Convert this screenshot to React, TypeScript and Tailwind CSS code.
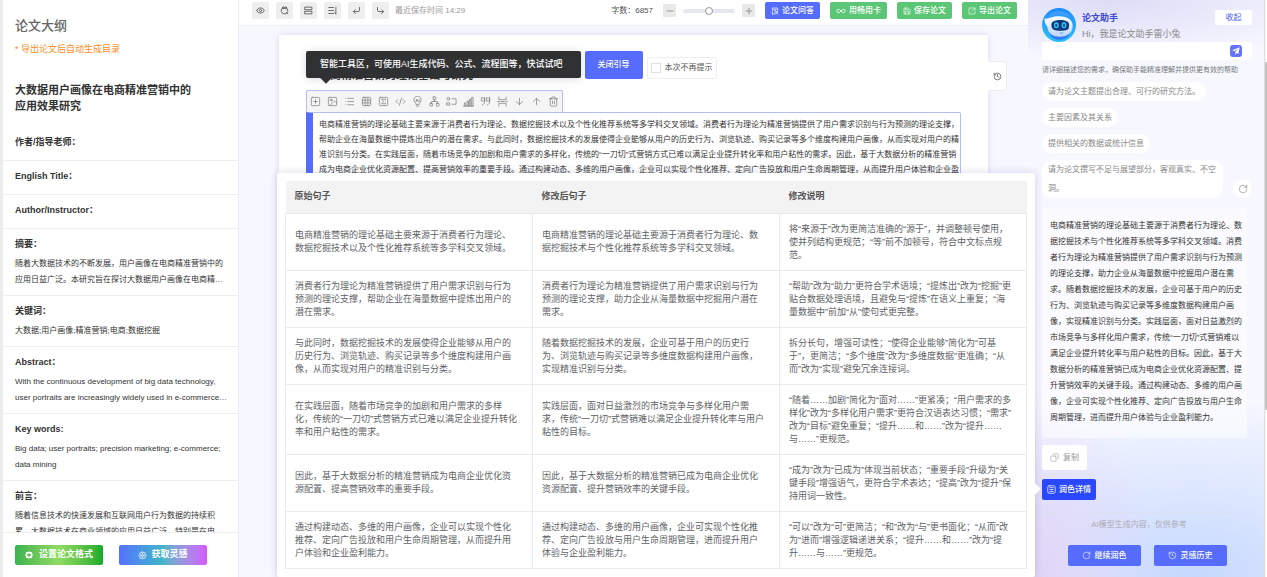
import React from 'react'
import {
  ArrowDown, ArrowUp, CodeXml, Copy, CornerDownLeft, CornerDownRight, Eye, Grid3x3, History, Image, Infinity,
  List, Minus, Network, Plus, RotateCw, Save, SquareArrowOutUpRight, SquarePlus, SquareSigma, Trash2,
} from 'lucide-react'

type IconProps = { className?: string }

const outline = [
  { label: '作者/指导老师：', body: '' },
  { label: 'English Title：', body: '' },
  { label: 'Author/Instructor：', body: '' },
  { label: '摘要：', body: '随着大数据技术的不断发展，用户画像在电商精准营销中的应用日益广泛。本研究旨在探讨大数据用户画像在电商精…' },
  { label: '关键词：', body: '大数据;用户画像;精准营销;电商;数据挖掘' },
  { label: 'Abstract：', body: 'With the continuous development of big data technology, user portraits are increasingly widely used in e-commerce…' },
  { label: 'Key words:', body: 'Big data; user portraits; precision marketing; e-commerce; data mining' },
  { label: '前言：', body: '随着信息技术的快速发展和互联网用户行为数据的持续积累，大数据技术在商业领域的应用日益广泛。特别是在电' },
]

const rows = [
  [
    '电商精准营销的理论基础主要来源于消费者行为理论、数据挖掘技术以及个性化推荐系统等多学科交叉领域。',
    '电商精准营销的理论基础主要源于消费者行为理论、数据挖掘技术与个性化推荐系统等多学科交叉领域。',
    '将“来源于”改为更简洁准确的“源于”，并调整顿号使用，使并列结构更规范；“等”前不加顿号，符合中文标点规范。',
  ],
  [
    '消费者行为理论为精准营销提供了用户需求识别与行为预测的理论支撑，帮助企业在海量数据中提炼出用户的潜在需求。',
    '消费者行为理论为精准营销提供了用户需求识别与行为预测的理论支撑，助力企业从海量数据中挖掘用户潜在需求。',
    '“帮助”改为“助力”更符合学术语境；“提炼出”改为“挖掘”更贴合数据处理语境，且避免与“提炼”在语义上重复；“海量数据中”前加“从”使句式更完整。',
  ],
  [
    '与此同时，数据挖掘技术的发展使得企业能够从用户的历史行为、浏览轨迹、购买记录等多个维度构建用户画像，从而实现对用户的精准识别与分类。',
    '随着数据挖掘技术的发展，企业可基于用户的历史行为、浏览轨迹与购买记录等多维度数据构建用户画像，实现精准识别与分类。',
    '拆分长句，增强可读性；“使得企业能够”简化为“可基于”，更简洁；“多个维度”改为“多维度数据”更准确；“从而”改为“实现”避免冗余连接词。',
  ],
  [
    '在实践层面，随着市场竞争的加剧和用户需求的多样化，传统的“一刀切”式营销方式已难以满足企业提升转化率和用户粘性的需求。',
    '实践层面，面对日益激烈的市场竞争与多样化用户需求，传统“一刀切”式营销难以满足企业提升转化率与用户粘性的目标。',
    '“随着……加剧”简化为“面对……”更紧凑；“用户需求的多样化”改为“多样化用户需求”更符合汉语表达习惯；“需求”改为“目标”避免重复；“提升……和……”改为“提升……与……”更规范。',
  ],
  [
    '因此，基于大数据分析的精准营销成为电商企业优化资源配置、提高营销效率的重要手段。',
    '因此，基于大数据分析的精准营销已成为电商企业优化资源配置、提升营销效率的关键手段。',
    '“成为”改为“已成为”体现当前状态；“重要手段”升级为“关键手段”增强语气，更符合学术表达；“提高”改为“提升”保持用词一致性。',
  ],
  [
    '通过构建动态、多维的用户画像，企业可以实现个性化推荐、定向广告投放和用户生命周期管理，从而提升用户体验和企业盈利能力。',
    '通过构建动态、多维的用户画像，企业可实现个性化推荐、定向广告投放与用户生命周期管理，进而提升用户体验与企业盈利能力。',
    '“可以”改为“可”更简洁；“和”改为“与”更书面化；“从而”改为“进而”增强逻辑递进关系；“提升……和……”改为“提升……与……”更规范。',
  ],
]

const prompts = [
  '请为论文主题提出合理、可行的研究方法。',
  '主要因素及其关系',
  '提供相关的数据或统计信息',
  '请为论文撰写不足与展望部分，客观真实、不空洞。',
]

const Svg = ({ className, children }: IconProps & { children: React.ReactNode }) => (
  <svg className={className} viewBox="0 0 24 24" fill="none" stroke="currentColor" strokeWidth="2" strokeLinecap="round" strokeLinejoin="round">
    {children}
  </svg>
)

const CheckIcon = ({ className }: IconProps) => (
  <Svg className={className}>
    <path d="M7 4.500a9 9 0 1 0 10 0M17 17l4 4" />
    <path d="M8 3h3v4H8zM14 3h3v4h-3z" />
  </Svg>
)

const StackIcon = ({ className }: IconProps) => (
  <Svg className={className}>
    <path d="M3 3h18v7H3zM3 14h18v7H3z" />
  </Svg>
)

const LineHeightIcon = ({ className }: IconProps) => (
  <Svg className={className}>
    <path d="M2 4h13M2 12h13M2 20h13M21 3v18M21 21l-3-3" />
  </Svg>
)

const BulbIcon = ({ className }: IconProps) => (
  <Svg className={className}>
    <path d="M8.500 18v-2.500a8 8 0 1 1 7 0V18zM9.500 22h5" strokeWidth="1.500" />
    <path d="M8.500 12l2-5 2 5M9.500 10.500h2M15.500 7v5" strokeWidth="1.500" />
  </Svg>
)

const FlowIcon = ({ className }: IconProps) => (
  <Svg className={className}>
    <g strokeWidth="1.500">
      <circle cx="5" cy="6" r="3" />
      <rect x="2" y="15" width="6" height="5" />
      <path d="M13 6h9v12h-9" />
    </g>
  </Svg>
)

const BarsIcon = ({ className }: IconProps) => (
  <Svg className={className}>
    <path d="M1 22h22M3 22v-7h3v7M9 22V11h3v11M14 22V7h3v15M19 22V3h3v19" strokeWidth="1.500" />
  </Svg>
)

const QuoteIcon = ({ className }: IconProps) => (
  <Svg className={className}>
    <path d="M10 4H3v7h7V4v8c0 4-2 6-5 8M21 4h-7v7h7V4v8c0 4-2 6-5 8" strokeWidth="1.500" />
  </Svg>
)

const BreakIcon = ({ className }: IconProps) => (
  <Svg className={className}>
    <path d="M4 2v6h16V2M4 22v-6h16v6M1 12h4M8 12h8M19 12h4" strokeWidth="1.500" />
  </Svg>
)

const DocIcon = ({ className }: IconProps) => (
  <Svg className={className}>
    <rect x="2" y="2" width="20" height="20" rx="4" />
    <path d="M7 7h10M8 12h8M7 17h10" />
  </Svg>
)

const AskIcon = ({ className }: IconProps) => (
  <Svg className={className}>
    <path d="M4 21V3h16v10M4 21h7M8 8h8M12 8v4" />
    <circle cx="15" cy="16" r="3.500" />
    <path d="M18 19l3 3" />
  </Svg>
)

const FlowerIcon = ({ className }: IconProps) => (
  <Svg className={className}>
    <circle cx="12" cy="12" r="3" />
    <path d="M12 2l3 3h4v4l3 3-3 3v4h-4l-3 3-3-3H5v-4l-3-3 3-3V5h4z" />
    <path d="M12 5v4M12 15v4M5 12h4M15 12h4" strokeWidth="1.500" />
  </Svg>
)

const HexIcon = ({ className }: IconProps) => (
  <svg className={className} viewBox="0 0 24 24" fill="none" stroke="currentColor" strokeWidth="5">
    <path d="M12 4l2.500 1.500h4.500v4l2 2.500-2 2.500v4h-4.500L12 20l-2.500-1.500H5v-4L3 12l2-2.500v-4h4.500z" strokeLinejoin="round" />
  </svg>
)

const Robot = () => (
  <svg className="size-[34px] shrink-0" viewBox="0 0 102 102">
    <defs>
      <linearGradient id="sky" x1="0" y1="0" x2="0" y2="1">
        <stop offset="0" stopColor="#1e8bff" />
        <stop offset="1" stopColor="#2bc0fa" />
      </linearGradient>
      <linearGradient id="shell" x1="0" y1="0" x2="0" y2="1">
        <stop offset="0" stopColor="#ffffff" />
        <stop offset="1" stopColor="#bcd5fb" />
      </linearGradient>
    </defs>
    <circle cx="51" cy="51" r="51" fill="url(#sky)" />
    <path d="M14 38c4-18 18-29 36-29 17 0 31 8 38 22-10-8-24-10-40-8-16 1-27 5-34 15z" fill="#3d9dff" />
    <path d="M22 75c5 14 19 22 34 20 14-1 24-9 28-20z" fill="#2f7df0" />
    <path d="M8 31c10 4 20-6 42-6 26 0 42 10 42 29 0 20-16 32-38 32S18 76 16 56C10 50 6 38 8 31z" fill="url(#shell)" />
    <path d="M32 41c11-7 35-7 45 0 7 5 5 20-1 24-10 4-32 4-41 0-8-5-9-19-3-24z" fill="#12387a" />
    <rect x="36" y="43" width="14" height="18" rx="6" fill="#29c9ee" />
    <rect x="59" y="43" width="14" height="18" rx="6" fill="#29c9ee" />
    <rect x="40" y="47" width="6" height="10" rx="3" fill="#0d4f8f" />
    <rect x="63" y="47" width="6" height="10" rx="3" fill="#0d4f8f" />
    <path d="M54 74c3 3 7 3 9-1" stroke="#2d6fd8" strokeWidth="2" fill="none" />
  </svg>
)

const headerTools = [
  { name: '预览', icon: Eye },
  { name: '查重', icon: CheckIcon },
  { name: '分页', icon: StackIcon },
  { name: '行距', icon: LineHeightIcon },
  { name: '撤销', icon: CornerDownLeft },
  { name: '重做', icon: CornerDownRight },
]

const blockTools = [
  { name: '新增', icon: SquarePlus },
  { name: '图片', icon: Image },
  { name: '列表', icon: List },
  { name: '表格', icon: Grid3x3 },
  { name: '公式', icon: SquareSigma },
  { name: '代码', icon: CodeXml },
  { name: 'AI', icon: BulbIcon },
  { name: '结构图', icon: Network },
  { name: '流程图', icon: FlowIcon },
  { name: '图表', icon: BarsIcon },
  { name: '引用', icon: QuoteIcon },
  { name: '分页符', icon: BreakIcon },
  { name: '下移', icon: ArrowDown },
  { name: '上移', icon: ArrowUp },
  { name: '删除', icon: Trash2 },
]

function Outline() {
  return (
    <aside className="flex w-[239px] shrink-0 flex-col border-r border-l-3 border-r-[#ececf2] border-l-[#ececec] bg-white">
      <div className="min-h-0 flex-1 overflow-hidden">
        <div className="px-3 pt-4">
          <h1 className="text-[13px] leading-5 font-medium text-[#666]">论文大纲</h1>
          <p className="mt-1 text-[9px] leading-[18px] text-[#fb8c1e]">* 导出论文后自动生成目录</p>
          <h2 className="mt-6 mb-[13px] max-w-[180px] text-[11px] leading-4 font-bold text-[#333]">大数据用户画像在电商精准营销中的应用效果研究</h2>
        </div>
        {outline.map((item) => (
          <section key={item.label} className="border-b border-[#eee] pt-2 pr-2 pb-[7px] pl-3 text-[#333]">
            <h3 className="text-[9px] leading-[14px] font-bold">{item.label}</h3>
            {item.body ? <p className="mt-[5px] text-[8px] leading-4">{item.body}</p> : <div className="h-1" />}
          </section>
        ))}
      </div>
      <div className="flex gap-4 border-t border-[#eee] bg-white px-3 pt-3 pb-3">
        <button className="flex h-5 w-[88px] items-center justify-center gap-1.5 rounded-xs bg-linear-to-r from-[#3bb350] via-[#8fdb62] to-[#0cab2b] text-[9px] font-bold text-white">
          <HexIcon className="size-2" />
          设置论文格式
        </button>
        <button className="flex h-5 w-[88px] items-center justify-center gap-1 rounded-xs bg-linear-to-r from-[#5570ff] via-[#41b5c6] to-[#d457ff] text-[9px] font-bold text-white">
          <FlowerIcon className="size-[9px]" />
          获取灵感
        </button>
      </div>
    </aside>
  )
}

function Header() {
  const action = 'flex h-[17px] items-center gap-[3px] rounded-xs px-1.5 text-[8px] font-medium whitespace-nowrap text-white'
  return (
    <header className="flex h-[26px] shrink-0 items-start border-b border-[#eeeff5] bg-white pt-0.5 pr-[11px] pl-[13px] text-[8px] leading-[17px]">
      <div className="flex gap-[7px]">
        {headerTools.map(({ name, icon: Icon }) => (
          <button key={name} aria-label={name} className="flex size-[17px] items-center justify-center rounded-xs bg-[#eee] text-[#444]">
            <Icon className="size-[9px]" />
          </button>
        ))}
      </div>
      <span className="ml-1.5 text-[#999]">最近保存时间 14:29</span>
      <span className="ml-auto text-[#555]">字数：6857</span>
      <div className="mt-0.5 ml-2.5 flex items-center gap-[7px]">
        <button aria-label="缩小" className="flex size-[13px] items-center justify-center bg-[#e9e9e9] text-[#888]">
          <Minus className="size-2.5" />
        </button>
        <input
          type="range"
          aria-label="缩放"
          defaultValue={50}
          className="h-1 w-[52px] appearance-none rounded-full bg-[#e4e7ed] [&::-webkit-slider-thumb]:size-2 [&::-webkit-slider-thumb]:appearance-none [&::-webkit-slider-thumb]:rounded-full [&::-webkit-slider-thumb]:border [&::-webkit-slider-thumb]:border-[#999] [&::-webkit-slider-thumb]:bg-white"
        />
        <button aria-label="放大" className="flex size-[13px] items-center justify-center bg-[#e9e9e9] text-[#888]">
          <Plus className="size-2.5" />
        </button>
      </div>
      <div className="ml-2.5 flex gap-2.5">
        <button className={action + ' bg-[#566cff]'}><AskIcon className="size-2" />论文问答</button>
        <button className={action + ' bg-[#5bc675]'}><Infinity className="size-2.5" />用畅用卡</button>
        <button className={action + ' bg-[#5bc675]'}><Save className="size-2" />保存论文</button>
        <button className={action + ' bg-[#5bc675]'}><SquareArrowOutUpRight className="size-2" />导出论文</button>
      </div>
    </header>
  )
}

function Paper() {
  return (
    <div className="relative mx-10 mt-[9px] flex-1 bg-white px-[27px] pt-4 shadow-[0_0_6px_rgba(60,60,120,0.15)]">
      <h2 className="absolute top-8 left-10 text-[11px] leading-4 font-bold text-[#333]">电商精准营销的理论基础与研究</h2>
      <div className="relative flex gap-1">
        <div className="relative flex h-[27px] items-center rounded-xs bg-[#303133] pr-[18px] pl-3.5 text-[9px] font-medium text-white shadow-[0_1px_8px_rgba(0,0,0,0.15)]">
          智能工具区，可使用AI生成代码、公式、流程图等，快试试吧
          <span className="absolute -bottom-1 left-4 size-2 rotate-45 bg-[#303133]" />
        </div>
        <button className="h-7 rounded-xs bg-[#566cff] px-[13px] text-[8px] font-medium text-white">关闭引导</button>
        <label className="mt-1.5 flex h-[22px] items-center gap-1 rounded-xs border border-[#eee] bg-white px-[3px] text-[8px] text-[#555]">
          <input type="checkbox" className="size-2.5 appearance-none border border-[#dcdfe6] bg-white" />
          本次不再提示
        </label>
      </div>
      <div className="mt-[11px] flex h-[22px] w-[257px] items-center gap-1.5 rounded-t-xs border border-b-0 border-[#b4bdf8] bg-[#f5f5f5] px-[3px] text-[#777]">
        {blockTools.map(({ name, icon: Icon }) => (
          <button key={name} aria-label={name}>
            <Icon className="size-[11px]" strokeWidth={1.5} />
          </button>
        ))}
      </div>
      <div className="h-40 rounded-r-xs border border-l-[7px] border-[#b4bdf8] border-l-[#566cff] pt-1 pl-1.5 text-[8px] leading-[15px] text-[#333]">
        电商精准营销的理论基础主要来源于消费者行为理论、数据挖掘技术以及个性化推荐系统等多学科交叉领域。消费者行为理论为精准营销提供了用户需求识别与行为预测的理论支撑，帮助企业在海量数据中提炼出用户的潜在需求。与此同时，数据挖掘技术的发展使得企业能够从用户的历史行为、浏览轨迹、购买记录等多个维度构建用户画像，从而实现对用户的精准识别与分类。在实践层面，随着市场竞争的加剧和用户需求的多样化，传统的“一刀切”式营销方式已难以满足企业提升转化率和用户粘性的需求。因此，基于大数据分析的精准营销成为电商企业优化资源配置、提高营销效率的重要手段。通过构建动态、多维的用户画像，企业可以实现个性化推荐、定向广告投放和用户生命周期管理，从而提升用户体验和企业盈利能力。
      </div>
      <button aria-label="历史版本" className="absolute top-[26px] left-full flex h-[30px] w-[19px] items-center justify-center rounded-r-xs border border-l-0 border-[#eee] bg-white text-[#555]">
        <History className="size-[9px]" />
      </button>
    </div>
  )
}

function ComparePanel() {
  return (
    <div className="absolute top-[173px] -right-[7px] left-[38px] z-10 rounded-xs bg-white p-2 shadow-[0_0_8px_rgba(60,60,120,0.2)]">
      <table className="w-full table-fixed border-collapse text-[9px] leading-[13px] text-[#606266]">
        <thead>
          <tr className="bg-[#f3f3f3] text-left">
            {['原始句子', '修改后句子', '修改说明'].map((title) => (
              <th key={title} className="h-8 px-[9px] font-bold text-[#555]">{title}</th>
            ))}
          </tr>
        </thead>
        <tbody>
          {rows.map((row) => (
            <tr key={row[0]}>
              {row.map((text) => (
                <td key={text} className="border border-[#ebebeb] pt-[9px] pr-3.5 pb-2 pl-[9px]">{text}</td>
              ))}
            </tr>
          ))}
        </tbody>
      </table>
      <span className="absolute top-[312px] -right-1 size-2 rotate-45 bg-white" />
    </div>
  )
}

function Assistant() {
  return (
    <aside className="flex w-[236px] shrink-0 flex-col bg-[radial-gradient(130px_190px_at_0%_100%,#e2d4f6_0%,transparent_100%),radial-gradient(300px_180px_at_70%_100%,#c5d8ff_0%,transparent_100%),radial-gradient(240px_60px_at_35%_0%,#dddcf7_0%,transparent_100%)] bg-[#f6f7ff] pt-2 pr-3 pl-3.5">
      <div className="flex gap-1.5">
        <Robot />
        <div className="min-w-0 flex-1 text-[9px]">
          <h2 className="mt-0.5 leading-4 font-bold text-[#3b48d8]">论文助手</h2>
          <p className="leading-4 text-[#888]">Hi，我是论文助手雷小兔</p>
        </div>
        <button className="mt-0.5 h-[15px] w-[37px] rounded-xs bg-white text-[8px] text-[#4a5cf5]">收起</button>
      </div>
      <div className="flex h-[18px] items-center rounded-xs bg-white pr-2.5">
        <input aria-label="输入需求" className="min-w-0 flex-1 text-[8px] outline-none" />
        <button aria-label="发送" className="flex size-3 items-center justify-center rounded-[3px] bg-[#6574f6]">
          <svg className="size-2" viewBox="0 0 24 24" fill="#fff"><path d="M23 1L1 10l6 3 11-8-8 10v8l4-5 5 3z" /></svg>
        </button>
      </div>
      <p className="mt-0.5 text-[7px] leading-4 text-[#777]">请详细描述您的需求，确保助手能精准理解并提供更有效的帮助</p>
      <div className="mt-1 flex items-end justify-between">
        <div className="flex w-[181px] flex-col items-start gap-[7px]">
          {prompts.map((text) => (
            <button key={text} className="rounded-[10px] bg-white px-1.5 text-left text-[8px] leading-[19px] text-[#888]">{text}</button>
          ))}
        </div>
        <button aria-label="换一批" className="flex size-[19px] items-center justify-center rounded-full bg-white text-[#888]">
          <RotateCw className="size-2.5" strokeWidth={1.5} />
        </button>
      </div>
      <p className="mt-2.5 w-[205px] rounded-xs bg-white/50 pt-2.5 pr-[3px] pb-3 pl-2 text-[8px] leading-4 text-[#333]">
        电商精准营销的理论基础主要源于消费者行为理论、数据挖掘技术与个性化推荐系统等多学科交叉领域。消费者行为理论为精准营销提供了用户需求识别与行为预测的理论支撑，助力企业从海量数据中挖掘用户潜在需求。随着数据挖掘技术的发展，企业可基于用户的历史行为、浏览轨迹与购买记录等多维度数据构建用户画像，实现精准识别与分类。实践层面，面对日益激烈的市场竞争与多样化用户需求，传统“一刀切”式营销难以满足企业提升转化率与用户粘性的目标。因此，基于大数据分析的精准营销已成为电商企业优化资源配置、提升营销效率的关键手段。通过构建动态、多维的用户画像，企业可实现个性化推荐、定向广告投放与用户生命周期管理，进而提升用户体验与企业盈利能力。
      </p>
      <button className="mt-[7px] flex h-[25px] w-[45px] items-center justify-center gap-1 rounded-xs bg-white text-[8px] text-[#999]">
        <Copy className="size-[9px] -scale-x-100" strokeWidth={1.5} />
        复制
      </button>
      <button className="mt-[9px] flex h-[21px] w-[54px] items-center justify-center gap-[3px] rounded-xs bg-[#2a48ff] text-[8px] font-medium text-white">
        <DocIcon className="size-[9px]" />
        润色详情
      </button>
      <p className="mt-3 mr-4 border-t border-[#dcdff0] text-center text-[8px] leading-6 text-[#aaaab4]">AI模型生成内容，仅供参考</p>
      <div className="mt-2 flex justify-center gap-[13px] text-[8px] font-medium text-white">
        <button className="flex h-[21px] w-[73px] items-center justify-center gap-1 rounded-xs bg-[#566cff]">
          <RotateCw className="size-[9px]" strokeWidth={1.5} />
          继续润色
        </button>
        <button className="flex h-[21px] w-[73px] items-center justify-center gap-1 rounded-xs bg-[#566cff]">
          <History className="size-[9px]" strokeWidth={1.5} />
          灵感历史
        </button>
      </div>
    </aside>
  )
}

export default function App() {
  return (
    <div lang="zh-CN" className="flex h-screen overflow-hidden bg-white font-['Liberation_Sans','Noto_Sans_CJK_SC',sans-serif]">
      <Outline />
      <main className="relative flex min-w-0 flex-1 flex-col bg-[#f6f7ff]">
        <Header />
        <Paper />
        <ComparePanel />
      </main>
      <Assistant />
      <div className="w-[3px] shrink-0 border-l border-[#ddd] bg-[#fafafa] pt-[62px]">
        <div className="h-[348px] rounded-full bg-[#c4c4c4]" />
      </div>
    </div>
  )
}
